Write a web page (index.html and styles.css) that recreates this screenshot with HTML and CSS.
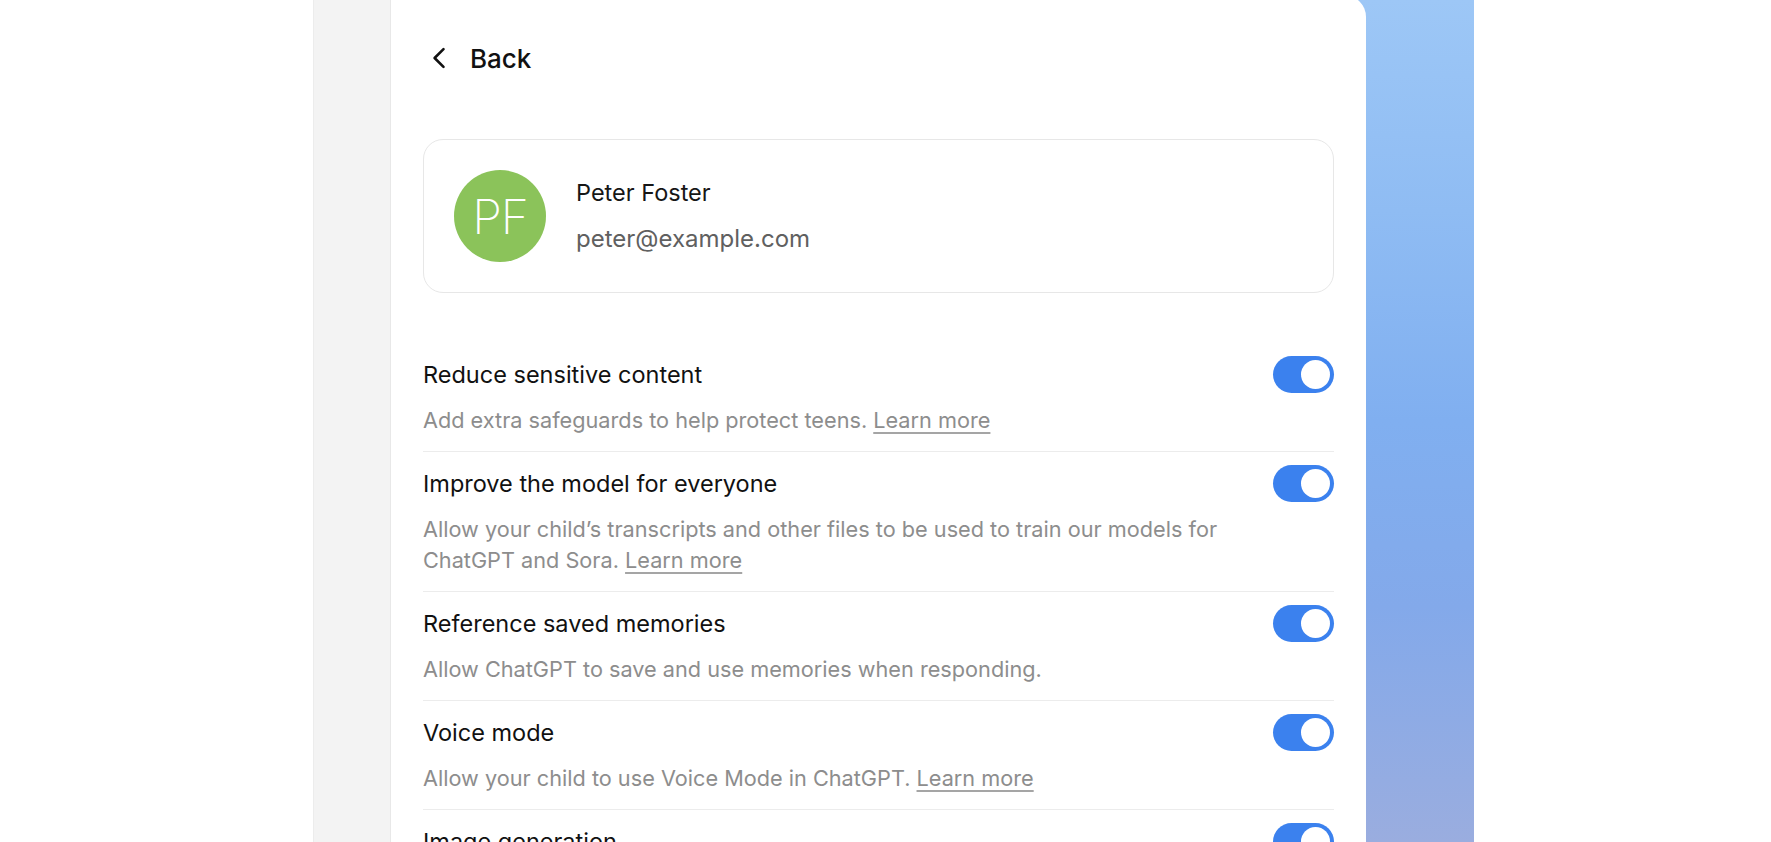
FILE: index.html
```html
<!DOCTYPE html>
<html lang="en">
<head>
<meta charset="utf-8">
<title>Parental controls</title>
<link rel="stylesheet" href="styles.css">
</head>
<body>
<div class="page">
  <div class="gutter"></div>
  <div class="sidebar"></div>
  <div class="main">
    <section class="card">
      <button class="back" type="button">
        <svg class="back-icon" width="16" height="22" viewBox="0 0 16 22" aria-hidden="true">
          <path d="M12.5 2.2 L3.6 11 L12.5 19.8" fill="none" stroke="#111" stroke-width="2.6" stroke-linecap="round" stroke-linejoin="round"/>
        </svg>
        <span>Back</span>
      </button>

      <div class="profile">
        <div class="avatar">PF</div>
        <div class="profile-text">
          <div class="name">Peter Foster</div>
          <div class="email">peter@example.com</div>
        </div>
      </div>

      <div class="settings">
        <div class="row">
          <div class="row-text">
            <div class="row-title">Reduce sensitive content</div>
            <div class="row-desc">Add extra safeguards to help protect teens. <a class="link">Learn more</a></div>
          </div>
          <span class="toggle"><span class="knob"></span></span>
        </div>
        <div class="row">
          <div class="row-text">
            <div class="row-title">Improve the model for everyone</div>
            <div class="row-desc">Allow your child’s transcripts and other files to be used to train our models for ChatGPT and Sora. <a class="link">Learn more</a></div>
          </div>
          <span class="toggle"><span class="knob"></span></span>
        </div>
        <div class="row">
          <div class="row-text">
            <div class="row-title">Reference saved memories</div>
            <div class="row-desc">Allow ChatGPT to save and use memories when responding.</div>
          </div>
          <span class="toggle"><span class="knob"></span></span>
        </div>
        <div class="row">
          <div class="row-text">
            <div class="row-title">Voice mode</div>
            <div class="row-desc">Allow your child to use Voice Mode in ChatGPT. <a class="link">Learn more</a></div>
          </div>
          <span class="toggle"><span class="knob"></span></span>
        </div>
        <div class="row">
          <div class="row-text">
            <div class="row-title">Image generation</div>
            <div class="row-desc">Allow your child to create and edit images in ChatGPT.</div>
          </div>
          <span class="toggle"><span class="knob"></span></span>
        </div>
      </div>
    </section>
    <div class="blue"></div>
  </div>
</div>
</body>
</html>
```

FILE: styles.css
```css
* { box-sizing: border-box; }

html, body {
  margin: 0;
  padding: 0;
  height: 100%;
  background: #ffffff;
  overflow: hidden;
}

body {
  font-family: Inter, "Noto Sans", "Liberation Sans", sans-serif;
  color: #111111;
  -webkit-font-smoothing: antialiased;
}

.page {
  display: flex;
  height: 842px;
  overflow: hidden;
}

.gutter {
  width: 313px;
  flex: none;
}

.sidebar {
  width: 78px;
  flex: none;
  background: #f3f3f3;
  border-left: 1px solid #ececec;
  border-right: 1px solid #e8e8e8;
}

.main {
  display: flex;
  flex: none;
  background: linear-gradient(180deg, #9dc7f6 0%, #8fbcf3 25%, #80aff0 50%, #83a9ea 72%, #9aaddf 100%) right top / 140px 100% no-repeat;
}

.card {
  width: 975px;
  flex: none;
  margin-top: -5px;
  background: #ffffff;
  border-top-right-radius: 22px;
  padding: 45px 32px 0 32px;
}

.blue {
  width: 108px;
  flex: none;
}

.back {
  display: flex;
  align-items: center;
  gap: 23px;
  padding: 0 0 0 8px;
  margin: 0;
  height: 36px;
  border: 0;
  background: none;
  font: inherit;
  font-size: 26px;
  font-weight: 450;
  color: #111111;
}

.back-icon { display: block; }

.profile {
  margin-top: 63px;
  display: flex;
  align-items: center;
  gap: 30px;
  padding: 30px;
  border: 1px solid #e7e7e7;
  border-radius: 20px;
}

.avatar {
  width: 92px;
  height: 92px;
  flex: none;
  border-radius: 50%;
  background: #8bc35a;
  color: #ffffff;
  display: flex;
  align-items: center;
  justify-content: center;
  font-size: 48px;
  font-weight: 250;
  letter-spacing: -1px;
}

.name {
  font-size: 23.5px;
  line-height: 32px;
  color: #161616;
}

.email {
  margin-top: 14px;
  font-size: 24px;
  line-height: 32px;
  color: #606060;
}

.settings {
  margin-top: 50px;
}

.row {
  display: flex;
  align-items: flex-start;
  gap: 24px;
  padding: 13px 0 15px;
  border-bottom: 1px solid #ececec;
}

.row-text {
  flex: 1;
  min-width: 0;
}

.row-title {
  font-size: 23.5px;
  line-height: 37px;
  color: #111111;
}

.row-desc {
  margin-top: 12px;
  font-size: 21.7px;
  line-height: 31px;
  color: #8d8d8d;
}

.link {
  color: #8d8d8d;
  text-decoration: underline;
  text-decoration-color: #a5a5a5;
  text-underline-offset: 4px;
  text-decoration-thickness: 1.5px;
}

.toggle {
  flex: none;
  width: 61px;
  height: 37px;
  border-radius: 19px;
  background: #3b81ee;
  display: flex;
  align-items: center;
  justify-content: flex-end;
  padding: 0 4px;
}

.knob {
  width: 29px;
  height: 29px;
  border-radius: 50%;
  background: #ffffff;
}
```
